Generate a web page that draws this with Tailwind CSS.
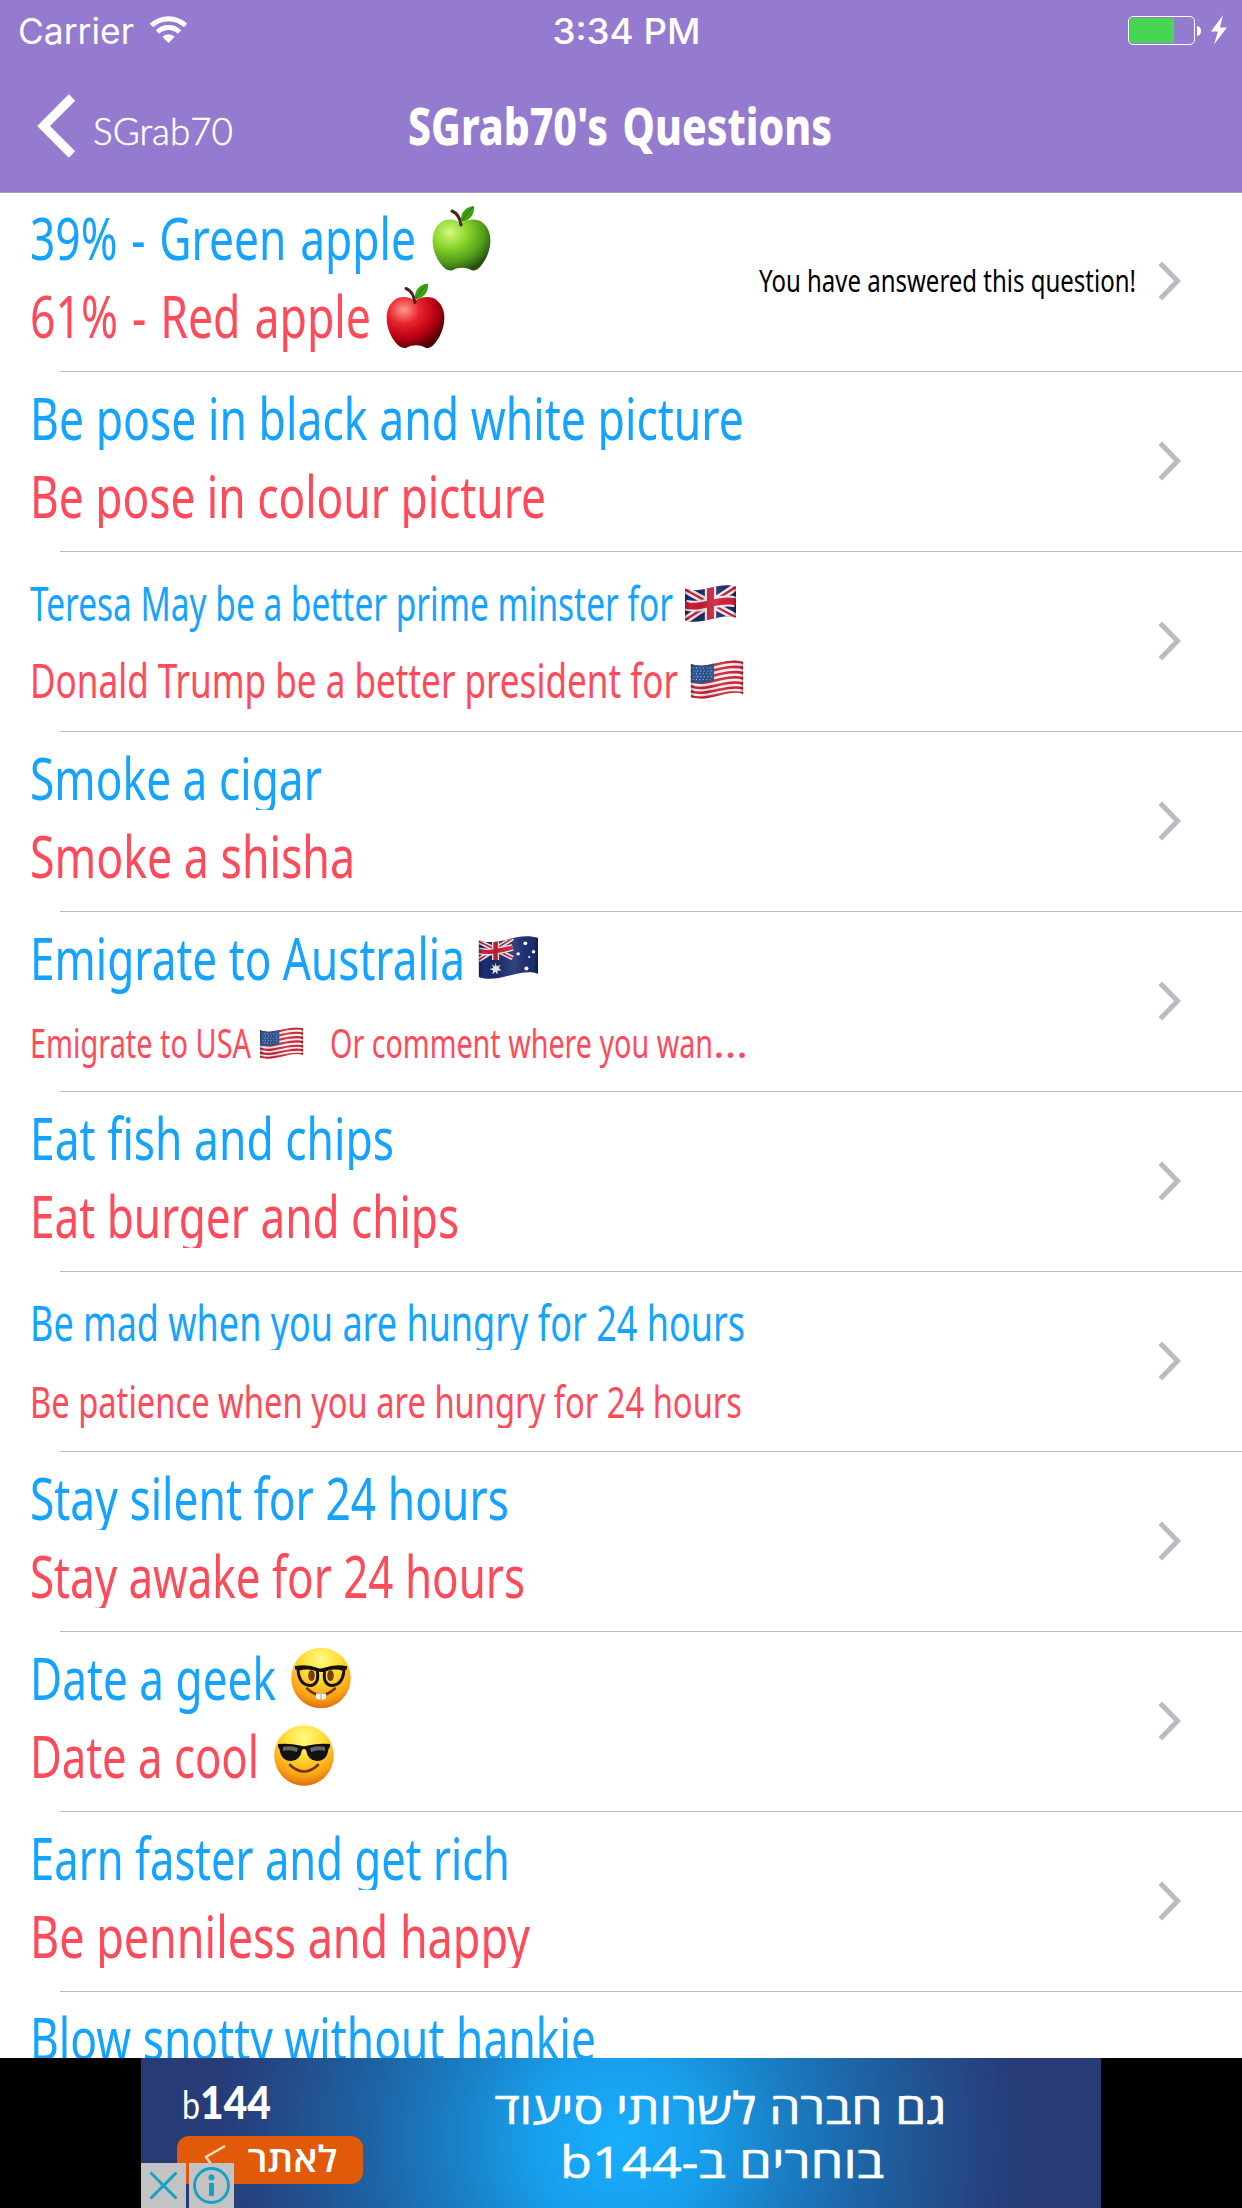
<!DOCTYPE html>
<html lang="en">
<head>
<meta charset="utf-8">
<title>SGrab70's Questions</title>
<script src="https://cdn.jsdelivr.net/npm/@tailwindcss/browser@4"></script>
</head>
<body class="bg-white">
<!-- shared artwork -->
<svg class="absolute h-0 w-0">
  <defs>
    <radialGradient id="gGreen" cx=".3" cy=".25" r=".8"><stop offset="0" stop-color="#d4fa80"/><stop offset=".4" stop-color="#86d32a"/><stop offset=".75" stop-color="#4f9a1b"/><stop offset="1" stop-color="#27500f"/></radialGradient>
    <radialGradient id="gRed" cx=".3" cy=".25" r=".8"><stop offset="0" stop-color="#ff9a8c"/><stop offset=".35" stop-color="#e8222c"/><stop offset=".7" stop-color="#b80010"/><stop offset="1" stop-color="#4c0008"/></radialGradient>
    <radialGradient id="gFace" cx=".5" cy=".2" r=".85"><stop offset="0" stop-color="#fffb80"/><stop offset=".4" stop-color="#ffdb33"/><stop offset=".75" stop-color="#fba115"/><stop offset="1" stop-color="#cf6208"/></radialGradient>
    <clipPath id="wave"><path d="M0 4 C8 7 16 6 27 3 C38 0 46 -1 54 2 V36 C46 33 38 35 27 38 C16 41 8 42 0 39Z"/></clipPath>
    <linearGradient id="shade"><stop offset="0" stop-color="#000" stop-opacity=".3"/><stop offset=".1" stop-color="#000" stop-opacity="0"/><stop offset=".3" stop-color="#000" stop-opacity=".12"/><stop offset=".6" stop-color="#fff" stop-opacity=".1"/><stop offset=".93" stop-color="#000" stop-opacity="0"/><stop offset="1" stop-color="#000" stop-opacity=".4"/></linearGradient>
  </defs>
  <symbol id="apple" viewBox="0 0 59 65">
    <path d="M29 17 C36 13 45 12 51 17 C61 25 60 42 53 54 C48 62 44 66 39 64 C34 61 26 61 21 64 C16 66 11 62 6 54 C-1 42 -2 25 8 17 C14 12 23 13 29 17Z"/>
    <path d="M29 19 C28 12 25 7 20 5" fill="none" stroke="#4d2419" stroke-width="3" stroke-linecap="round"/>
    <path d="M29 16 C28 6 34 1 42 0 C43 8 38 15 29 16Z" fill="#3fa013"/><path d="M30 15 Q35 6 41 1" stroke="#26720a" fill="none"/>
  </symbol>
  <symbol id="usa" viewBox="0 0 54 41" preserveAspectRatio="none">
    <g clip-path="url(#wave)"><rect width="54" height="41" fill="#f4f1f1"/>
      <g fill="none" stroke="#cf2336" stroke-width="2.7">
        <path d="M0 5.500 C9 9 16 7 27 4.500 S46 .5 54 3"/><path d="M0 11 C9 14.500 16 12.500 27 10 S46 6 54 8.500"/><path d="M0 16.500 C9 20 16 18 27 15.500 S46 11.500 54 14"/><path d="M0 22 C9 25.500 16 23.500 27 21 S46 17 54 19.500"/><path d="M0 27.500 C9 31 16 29 27 26.500 S46 22.500 54 25"/><path d="M0 32.700 C9 36 16 34 27 31.700 S46 27.700 54 30"/><path d="M0 38 C9 41 16 39 27 36.800 S46 33 54 35"/>
      </g>
      <path d="M0 3 C9 7 16 6 24 3 V21 C16 24 9 26 0 23Z" fill="#2f5798"/>
      <g stroke="#b9cbe4" stroke-width="1.1" stroke-dasharray="1.1 2.4"><path d="M2 8.500H23M3 11.500H23M2 14.500H23M3 17.500H23M2 20.500H20"/></g>
      <rect width="54" height="41" fill="url(#shade)"/></g>
  </symbol>
  <symbol id="uk" viewBox="0 0 54 41" preserveAspectRatio="none">
    <g clip-path="url(#wave)"><rect width="54" height="41" fill="#202c66"/>
      <path d="M0 5 L54 36 M54 2 L0 39" stroke="#f0f0f4" stroke-width="8"/><path d="M0 5 L54 36 M54 2 L0 39" stroke="#d11f38" stroke-width="2.6"/>
      <path d="M27 0V41M0 22 C9 25 16 23 27 20.500 S46 16.500 54 19" stroke="#f0f0f4" stroke-width="12" fill="none"/><path d="M27 0V41M0 22 C9 25 16 23 27 20.500 S46 16.500 54 19" stroke="#d11f38" stroke-width="7.500" fill="none"/>
      <rect width="54" height="41" fill="url(#shade)"/></g>
  </symbol>
  <symbol id="aus" viewBox="0 0 54 41" preserveAspectRatio="none">
    <g clip-path="url(#wave)"><rect width="54" height="41" fill="#1b2e70"/>
      <path d="M0 5 L31 21 M31 2 L0 23" stroke="#f0f0f4" stroke-width="4.5"/><path d="M0 5 L31 21 M31 2 L0 23" stroke="#d11f38" stroke-width="1.6"/>
      <path d="M15.5 3V23M0 14 C8 17 18 14 31 11" stroke="#f0f0f4" stroke-width="6.5" fill="none"/><path d="M15.5 3V23M0 14 C8 17 18 14 31 11" stroke="#d11f38" stroke-width="4" fill="none"/>
      <g fill="#fff"><path d="M15.500 25.500L16.600 29.100L20.200 27.400L18.300 30.500L21 33L17.500 33L17 37L15.500 34L12.500 36.500L13.400 33L10 31.500L13.500 30.500L12 27L14.700 29Z"/><circle cx="42.500" cy="7" r="1.800"/><circle cx="36" cy="17" r="1.600"/><circle cx="50" cy="15" r="1.600"/><circle cx="43.500" cy="31" r="1.900"/><circle cx="46" cy="20" r="1"/></g>
      <rect width="54" height="41" fill="url(#shade)"/></g>
  </symbol>
  <symbol id="geek" viewBox="0 0 60 61">
    <ellipse cx="30" cy="30.500" rx="29.800" ry="30.300" fill="url(#gFace)"/>
    <ellipse cx="20.500" cy="28" rx="3.300" ry="5.500" fill="#7a3e08"/><ellipse cx="39.500" cy="28" rx="3.300" ry="5.500" fill="#7a3e08"/>
    <path d="M16 41 Q30 54 44 41" fill="none" stroke="#6d3606" stroke-width="2.400" stroke-linecap="round"/>
    <path d="M25 46H35V50Q35 52 32.500 52H27.500Q25 52 25 50Z" fill="#f2f2f2"/><path d="M30 46V52" stroke="#aaa"/>
    <g fill="none" stroke="#16110c" stroke-width="3"><path d="M7 22 Q16 19 26 22 Q29 36 20 38 Q8 38 7 22ZM53 22 Q44 19 34 22 Q31 36 40 38 Q52 38 53 22Z"/><path d="M4 20.500 Q16 18 26 22 Q30 23.500 34 22 Q44 18 56 20.500" stroke-width="3.500"/></g>
  </symbol>
  <symbol id="cool" viewBox="0 0 60 61">
    <ellipse cx="30" cy="30.500" rx="29.800" ry="30.300" fill="url(#gFace)"/>
    <path d="M16 40 Q30 53 44 40" fill="none" stroke="#6d3606" stroke-width="2.600" stroke-linecap="round"/>
    <path d="M4 19 Q16 18 26 20.500 Q30 22 34 20.500 Q44 18 56 19 V22 L54.500 24 Q53 36 43 36 Q34 36 32 25 Q30 23 28 25 Q26 36 17 36 Q7 36 5.500 24 L4 22Z" fill="#111"/>
    <path d="M9 22 Q17 20 24 23 L23 27 Q16 24 9 26ZM51 22 Q43 20 36 23 L37 27 Q44 24 51 26Z" fill="#666"/>
  </symbol>
  <symbol id="chev" viewBox="0 0 24 40"><path d="M2.300 2.300 L19.500 20 L2.300 37.700" fill="none" stroke="#bcbbc4" stroke-width="5"/></symbol>
</svg>

<div class="relative flex h-[2208px] w-[1242px] flex-col overflow-hidden bg-white">
  <header class="relative z-10 -mb-px flex h-[193px] shrink-0 flex-col border-b border-[#a5a3a8] bg-[#957bcf]">
    <svg class="block h-[60px] w-full" viewBox="0 0 1242 60" fill="#fff" font-family="Inter, sans-serif" font-size="35.500">
      <text x="18" y="43.500" textLength="116" lengthAdjust="spacingAndGlyphs">Carrier</text>
      <g fill="none" stroke="#fff" stroke-width="5"><path d="M151.500 25.500 A24.500 24.500 0 0 1 185.500 25.500"/><path d="M157.500 32 A15.800 15.800 0 0 1 179.500 32"/></g>
      <path d="M168.500 43 L162.300 36.800 A8.800 8.800 0 0 1 174.700 36.800Z"/>
      <text x="552.500" y="43.500" font-weight="500" textLength="148" lengthAdjust="spacingAndGlyphs">3:34 PM</text>
      <rect x="1128.500" y="16.500" width="66" height="28" rx="4.500" fill="none" stroke="#fff"/>
      <path d="M1132 18H1174V43H1132Q1130 43 1130 41V20Q1130 18 1132 18Z" fill="#46d653"/>
      <path d="M1197 26Q1201 26.500 1201 31Q1201 35.500 1197 36Z"/>
      <path d="M1223 15 L1211 31.500 H1218 L1214 44.500 L1227 27.500 H1220Z"/>
    </svg>
    <svg class="block h-[132px] w-full" viewBox="0 60 1242 132" fill="#fff">
      <path d="M72 97.500 L43.500 126 L72 154.500" fill="none" stroke="#fff" stroke-width="9"/>
      <text x="93" y="144.500" font-family="Lato, sans-serif" font-weight="300" font-size="36.500" stroke="#fff" stroke-width=".5" textLength="140" lengthAdjust="spacingAndGlyphs">SGrab70</text>
      <text x="408" y="144.500" font-family="Noto Sans, sans-serif" font-weight="800" font-size="51.500" word-spacing="5" textLength="424" lengthAdjust="spacingAndGlyphs">SGrab70's Questions</text>
    </svg>
  </header>

  <main class="flex h-[1866px] shrink-0 flex-col overflow-hidden font-['Noto_Sans',sans-serif] text-[59px] font-normal [font-stretch:75%]">
    <section class="relative flex h-[180px] shrink-0">
      <div class="flex w-[750px] flex-col fill-[#14a3ff]">
        <svg class="block h-[78px] w-[750px] overflow-visible"><text x="30" y="68" word-spacing="3" textLength="386" lengthAdjust="spacingAndGlyphs">39% - Green apple</text><use href="#apple" x="432" y="14" width="59" height="65" fill="url(#gGreen)"/></svg>
        <svg class="block h-[78px] w-[750px] overflow-visible fill-[#ff4a5a]"><text x="30" y="68" word-spacing="3" textLength="341" lengthAdjust="spacingAndGlyphs">61% - Red apple</text><use href="#apple" x="386" y="13.500" width="59" height="65" fill="url(#gRed)"/></svg>
      </div>
      <svg class="block h-[178px] w-[400px] overflow-visible"><text x="9" y="99.500" font-size="31.500" textLength="377" lengthAdjust="spacingAndGlyphs">You have answered this question!</text></svg>
      <svg class="mt-[69px] ml-[8px] h-10 w-6"><use href="#chev"/></svg>
      <div class="absolute right-0 bottom-0 left-[60px] h-px bg-[#bcbbbe]"></div>
    </section>
    <section class="relative flex h-[180px] shrink-0 justify-between pr-[60px]">
      <div class="flex flex-col">
        <svg class="block h-[78px] w-[800px] fill-[#14a3ff]"><text x="30" y="68" textLength="714" lengthAdjust="spacingAndGlyphs">Be pose in black and white picture</text></svg>
        <svg class="block h-[78px] w-[800px] fill-[#ff4a5a]"><text x="30" y="68" textLength="516" lengthAdjust="spacingAndGlyphs">Be pose in colour picture</text></svg>
      </div>
      <svg class="mt-[69px] h-10 w-6"><use href="#chev"/></svg>
      <div class="absolute right-0 bottom-0 left-[60px] h-px bg-[#bcbbbe]"></div>
    </section>
    <section class="relative flex h-[180px] shrink-0 justify-between pr-[60px]">
      <div class="flex flex-col">
        <svg class="block h-[78px] w-[800px] overflow-visible fill-[#14a3ff]"><text x="30" y="68.500" font-size="47" textLength="643" lengthAdjust="spacingAndGlyphs">Teresa May be a better prime minster for</text><use href="#uk" x="685" y="33" width="51" height="37"/></svg>
        <svg class="block h-[78px] w-[800px] overflow-visible fill-[#ff4a5a]"><text x="30" y="67.500" font-size="47.500" textLength="648" lengthAdjust="spacingAndGlyphs">Donald Trump be a better president for</text><use href="#usa" x="690.500" y="30" width="53" height="39"/></svg>
      </div>
      <svg class="mt-[69px] h-10 w-6"><use href="#chev"/></svg>
      <div class="absolute right-0 bottom-0 left-[60px] h-px bg-[#bcbbbe]"></div>
    </section>
    <section class="relative flex h-[180px] shrink-0 justify-between pr-[60px]">
      <div class="flex flex-col">
        <svg class="block h-[78px] w-[800px] fill-[#14a3ff]"><text x="30" y="68" textLength="292" lengthAdjust="spacingAndGlyphs">Smoke a cigar</text></svg>
        <svg class="block h-[78px] w-[800px] fill-[#ff4a5a]"><text x="30" y="68" textLength="325" lengthAdjust="spacingAndGlyphs">Smoke a shisha</text></svg>
      </div>
      <svg class="mt-[69px] h-10 w-6"><use href="#chev"/></svg>
      <div class="absolute right-0 bottom-0 left-[60px] h-px bg-[#bcbbbe]"></div>
    </section>
    <section class="relative flex h-[180px] shrink-0 justify-between pr-[60px]">
      <div class="flex flex-col">
        <svg class="block h-[78px] w-[800px] overflow-visible fill-[#14a3ff]"><text x="30" y="68" textLength="435" lengthAdjust="spacingAndGlyphs">Emigrate to Australia</text><use href="#aus" x="478.500" y="24" width="59.500" height="43"/></svg>
        <svg class="block h-[78px] w-[800px] overflow-visible fill-[#ff4a5a]"><text x="30" y="68" font-size="39.500" textLength="221" lengthAdjust="spacingAndGlyphs">Emigrate to USA</text><use href="#usa" x="260" y="37" width="43.500" height="32"/><text y="68" font-size="39.500"><tspan x="330" textLength="383" lengthAdjust="spacingAndGlyphs">Or comment where you wan</tspan><tspan x="713" textLength="35" lengthAdjust="spacingAndGlyphs">…</tspan></text></svg>
      </div>
      <svg class="mt-[69px] h-10 w-6"><use href="#chev"/></svg>
      <div class="absolute right-0 bottom-0 left-[60px] h-px bg-[#bcbbbe]"></div>
    </section>
    <section class="relative flex h-[180px] shrink-0 justify-between pr-[60px]">
      <div class="flex flex-col">
        <svg class="block h-[78px] w-[800px] fill-[#14a3ff]"><text x="30" y="68" textLength="364" lengthAdjust="spacingAndGlyphs">Eat fish and chips</text></svg>
        <svg class="block h-[78px] w-[800px] fill-[#ff4a5a]"><text x="30" y="68" textLength="429" lengthAdjust="spacingAndGlyphs">Eat burger and chips</text></svg>
      </div>
      <svg class="mt-[69px] h-10 w-6"><use href="#chev"/></svg>
      <div class="absolute right-0 bottom-0 left-[60px] h-px bg-[#bcbbbe]"></div>
    </section>
    <section class="relative flex h-[180px] shrink-0 justify-between pr-[60px]">
      <div class="flex flex-col">
        <svg class="block h-[78px] w-[800px] fill-[#14a3ff]"><text x="30" y="68.500" font-size="49" textLength="715" lengthAdjust="spacingAndGlyphs">Be mad when you are hungry for 24 hours</text></svg>
        <svg class="block h-[78px] w-[800px] fill-[#ff4a5a]"><text x="30" y="68" font-size="44.500" textLength="712" lengthAdjust="spacingAndGlyphs">Be patience when you are hungry for 24 hours</text></svg>
      </div>
      <svg class="mt-[69px] h-10 w-6"><use href="#chev"/></svg>
      <div class="absolute right-0 bottom-0 left-[60px] h-px bg-[#bcbbbe]"></div>
    </section>
    <section class="relative flex h-[180px] shrink-0 justify-between pr-[60px]">
      <div class="flex flex-col">
        <svg class="block h-[78px] w-[800px] fill-[#14a3ff]"><text x="30" y="68" textLength="479" lengthAdjust="spacingAndGlyphs">Stay silent for 24 hours</text></svg>
        <svg class="block h-[78px] w-[800px] fill-[#ff4a5a]"><text x="30" y="68" textLength="495" lengthAdjust="spacingAndGlyphs">Stay awake for 24 hours</text></svg>
      </div>
      <svg class="mt-[69px] h-10 w-6"><use href="#chev"/></svg>
      <div class="absolute right-0 bottom-0 left-[60px] h-px bg-[#bcbbbe]"></div>
    </section>
    <section class="relative flex h-[180px] shrink-0 justify-between pr-[60px]">
      <div class="flex flex-col">
        <svg class="block h-[78px] w-[800px] overflow-visible fill-[#14a3ff]"><text x="30" y="68" textLength="246" lengthAdjust="spacingAndGlyphs">Date a geek</text><use href="#geek" x="291" y="15.500" width="60" height="61"/></svg>
        <svg class="block h-[78px] w-[800px] overflow-visible fill-[#ff4a5a]"><text x="30" y="68" textLength="229" lengthAdjust="spacingAndGlyphs">Date a cool</text><use href="#cool" x="274" y="15" width="60" height="61"/></svg>
      </div>
      <svg class="mt-[69px] h-10 w-6"><use href="#chev"/></svg>
      <div class="absolute right-0 bottom-0 left-[60px] h-px bg-[#bcbbbe]"></div>
    </section>
    <section class="relative flex h-[180px] shrink-0 justify-between pr-[60px]">
      <div class="flex flex-col">
        <svg class="block h-[78px] w-[800px] fill-[#14a3ff]"><text x="30" y="68" textLength="480" lengthAdjust="spacingAndGlyphs">Earn faster and get rich</text></svg>
        <svg class="block h-[78px] w-[800px] fill-[#ff4a5a]"><text x="30" y="68" textLength="500" lengthAdjust="spacingAndGlyphs">Be penniless and happy</text></svg>
      </div>
      <svg class="mt-[69px] h-10 w-6"><use href="#chev"/></svg>
      <div class="absolute right-0 bottom-0 left-[60px] h-px bg-[#bcbbbe]"></div>
    </section>
    <section class="flex h-[180px] shrink-0">
      <svg class="block h-[78px] w-[800px] fill-[#14a3ff]"><text x="30" y="68" textLength="566" lengthAdjust="spacingAndGlyphs">Blow snotty without hankie</text></svg>
    </section>
  </main>

  <!-- advertisement banner -->
  <footer class="flex h-[150px] shrink-0 justify-center bg-black">
    <div class="relative flex h-full w-[960px] justify-between bg-[radial-gradient(circle_405px_at_477px_82px,#18afff_0%,#189de9_22%,#1a80c6_40%,#1d64a5_61%,#234c8a_82%,#273b77_100%)]">
      <svg class="block h-full w-[240px]" fill="#fff">
        <text x="41" y="61" font-family="Lato, sans-serif" font-size="38" textLength="18" lengthAdjust="spacingAndGlyphs">b</text>
        <text x="59" y="61" font-family="Lato, sans-serif" font-weight="900" font-size="46" textLength="71" lengthAdjust="spacingAndGlyphs">144</text>
        <rect x="36" y="78" width="186" height="48" rx="12" fill="#e05a09"/>
        <path d="M84 88 L65 99 L70 106" fill="none" stroke="#ffd9b5" stroke-width="2.500"/>
        <text x="151.500" y="114" text-anchor="middle" font-family="Open Sans, DejaVu Sans, sans-serif" font-weight="600" font-size="36" textLength="90" lengthAdjust="spacingAndGlyphs">לאתר</text>
      </svg>
      <svg class="mr-[120px] block h-full w-[560px]" fill="#fff" stroke="#fff" stroke-width=".6" font-family="Open Sans, DejaVu Sans, sans-serif" font-weight="500" font-size="44">
        <text x="299.500" y="66" text-anchor="middle" direction="rtl" textLength="452" lengthAdjust="spacingAndGlyphs">גם חברה לשרותי סיעוד</text>
        <text x="301" y="120" text-anchor="middle" direction="rtl" textLength="324" lengthAdjust="spacingAndGlyphs">בוחרים ב-b144</text>
      </svg>
      <div class="absolute bottom-0 left-0 flex gap-[3px]">
        <svg class="block size-[45px] bg-[#c3c3c3]" fill="none" stroke="#15a0c5" stroke-width="3"><path d="M9.500 9.500 L35.500 35.500 M35.500 9.500 L9.500 35.500"/></svg>
        <svg class="block size-[45px] bg-[#c3c3c3]" fill="none" stroke="#15a0c5" stroke-width="2.800"><circle cx="22.500" cy="22.500" r="17"/><circle cx="22.500" cy="14.500" r="3" fill="#15a0c5" stroke="none"/><path d="M22.500 20 V33" stroke-width="5"/></svg>
      </div>
    </div>
  </footer>
</div>
</body>
</html>
